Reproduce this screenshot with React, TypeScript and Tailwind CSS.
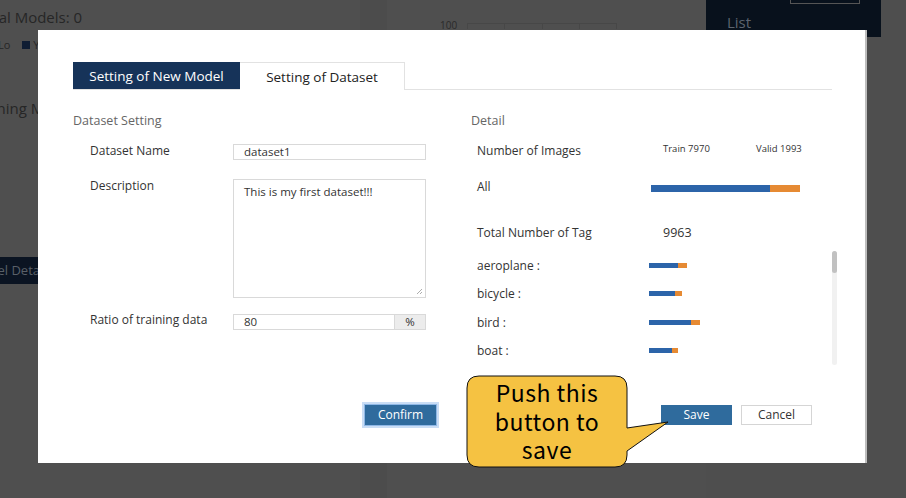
import React from 'react';

const tags = [
  { name: 'aeroplane :', train: 29, valid: 9 },
  { name: 'bicycle :', train: 26, valid: 7 },
  { name: 'bird :', train: 42, valid: 9 },
  { name: 'boat :', train: 23, valid: 6 },
  { name: 'bottle :', train: 30, valid: 8 },
];

const Callout = () => (
  <div className="absolute left-[466px] top-[375px] w-[204px] h-[94px]">
    <svg width="204" height="94" className="absolute inset-0">
      <path
        d="M13,1 H149 Q161,1 161,13 V53 L202,47 L161,76 V80 Q161,92 149,92 H13 Q1,92 1,80 V13 Q1,1 13,1 Z"
        fill="#f5c242"
        stroke="#111"
        strokeWidth="1"
      />
    </svg>
    <div className="relative w-[162px] pt-[3px] text-center text-[23px] leading-[28.5px] tracking-[0.5px] text-black font-['Noto_Sans_CJK_JP',sans-serif]">
      Push this
      <br />
      button to
      <br />
      save
    </div>
  </div>
);

export default function App() {
  return (
    <div className="relative w-[906px] h-[498px] overflow-hidden bg-[#4e4e4e] font-['Open_Sans',sans-serif]">
      {/* page underneath the dialog */}
      <div className="flex h-full">
        <div className="w-[360px] bg-[#4f4f4f] text-[#262626]">
          <div className="ml-[-24px] pt-[6px] text-[15px]">Total Models: 0</div>
          <div className="flex items-center mt-[8px] text-[11px]">
            <span className="ml-[-2px]">Lo</span>
            <span className="ml-[12px] w-[8px] h-[8px] bg-[#0f1d33]" />
            <span className="ml-[3px]">Y</span>
          </div>
          <div className="ml-[-30px] mt-[44px] text-[15px]">Training Models</div>
          <div className="mt-[137px] w-[38px] h-[27px] bg-[#0b1422] overflow-hidden">
            <div className="ml-[-30px] whitespace-nowrap text-[13px] leading-[27px] text-[#5a6068]">Model Details</div>
          </div>
        </div>
        <div className="w-[27px] bg-[#4c4c4c]" />
        <div className="w-[319px] bg-[#4f4f4f] pt-[18px] pl-[53px]">
          <div className="flex items-center gap-[10px]">
            <span className="text-[10px] text-[#2a2a2a]">100</span>
            <div className="flex w-[150px] h-[6px] border-t border-[#474747]">
              <div className="flex-1 border-l border-[#474747]" />
              <div className="flex-1 border-l border-[#474747]" />
              <div className="flex-1 border-l border-[#474747]" />
              <div className="flex-1 border-l border-r border-[#474747]" />
            </div>
          </div>
        </div>
        <div className="w-[175px]">
          <div className="h-[37px] bg-[#08111c] pl-[21px] relative">
            <div className="absolute left-[84px] top-0 w-[70px] h-[4px] border border-t-0 border-[#555]" />
            <div className="pt-[12px] text-[15px] leading-[20px] text-[#5c6470]">List</div>
          </div>
        </div>
      </div>

      {/* dialog */}
      <div className="absolute left-[38px] top-[30px] w-[829px] h-[433px] bg-white border-r-2 border-[#bdbdbd] px-[35px] pt-[32px] text-[#333]">
        <div className="flex border-b border-[#e2e2e2] w-[759px]">
          <div className="w-[167px] h-[27px] bg-[#163359] text-white text-[13.5px] leading-[29px] text-center">
            Setting of New Model
          </div>
          <div className="w-[165px] h-[28px] mb-[-1px] bg-white border-t border-r border-[#e2e2e2] text-[#222] text-[13.5px] leading-[29px] text-center">
            Setting of Dataset
          </div>
        </div>

        <div className="grid grid-cols-[398px_1fr]">
          {/* left column */}
          <div>
            <div className="mt-[22px] text-[12.5px] leading-[18px] text-[#666]">Dataset Setting</div>
            <div className="pl-[17px] text-[12px] text-[#333]">
              <div className="flex mt-[14px]">
                <div className="w-[143px] leading-[14px]">Dataset Name</div>
                <div className="w-[193px] h-[16px] border border-[#d9d9d9] pl-[10px] text-[11.5px] leading-[14px]">dataset1</div>
              </div>
              <div className="flex mt-[19px]">
                <div className="w-[143px] leading-[14px]">Description</div>
                <div className="relative w-[193px] h-[119px] border border-[#d9d9d9] pl-[10px] pt-[5px] text-[11.5px] leading-[14px]">
                  This is my first dataset!!!
                  <svg width="7" height="7" className="absolute right-[2px] bottom-[2px]">
                    <path d="M1,6 L6,1 M4,6 L6,4" stroke="#999" strokeWidth="0.8" />
                  </svg>
                </div>
              </div>
              <div className="flex mt-[16px]">
                <div className="w-[143px] leading-[14px] mt-[-1px]">Ratio of training data</div>
                <div className="flex w-[193px] h-[16px] border border-[#d9d9d9] text-[11.5px] leading-[14px]">
                  <div className="flex-1 pl-[10px]">80</div>
                  <div className="w-[31px] bg-[#ececec] border-l border-[#d9d9d9] text-center">%</div>
                </div>
              </div>
            </div>
          </div>

          {/* right column */}
          <div>
            <div className="mt-[22px] text-[12.5px] leading-[18px] text-[#666]">Detail</div>
            <div className="pl-[6px] text-[12px] text-[#333]">
              <div className="flex items-center mt-[14px] h-[14px]">
                <div className="w-[186px]">Number of Images</div>
                <div className="w-[93px] text-[9.5px] -mt-[4px]">Train 7970</div>
                <div className="text-[9.5px] -mt-[4px]">Valid 1993</div>
              </div>
              <div className="flex mt-[22px] h-[16px]">
                <div className="w-[174px] leading-[14px]">All</div>
                <div className="flex mt-[5px] h-[7px] w-[149px]">
                  <div className="w-[119px] bg-[#2c64a9]" />
                  <div className="flex-1 bg-[#e68a33]" />
                </div>
              </div>
              <div className="flex mt-[30px] h-[14px] items-center">
                <div className="w-[186px]">Total Number of Tag</div>
                <div className="text-[12.5px]">9963</div>
              </div>
              <div className="flex mt-[11px] h-[114px] w-[360px]">
                <div className="flex-1 overflow-hidden">
                  {tags.map((t) => (
                    <div key={t.name} className="flex items-center h-[28.5px]">
                      <div className="w-[172px] leading-[14px] mt-[1px]">{t.name}</div>
                      <div className="flex h-[5px]">
                        <div className="bg-[#2c64a9]" style={{ width: t.train }} />
                        <div className="bg-[#e68a33]" style={{ width: t.valid }} />
                      </div>
                    </div>
                  ))}
                </div>
                <div className="w-[5px] h-full bg-[#f1f1f1] rounded-full">
                  <div className="w-[5px] h-[22px] bg-[#c1c1c1] rounded-full" />
                </div>
              </div>
            </div>
          </div>
        </div>

        <div className="flex mt-[39px] text-[12px]">
          <button className="ml-[291px] w-[73px] h-[22px] bg-[#2f6b9d] text-white border border-[#8fb8e6] shadow-[0_0_0_2px_#c9ddf5]">
            Confirm
          </button>
          <button className="ml-[224px] mt-[1px] w-[71px] h-[20px] bg-[#2f6b9d] text-white">Save</button>
          <button className="ml-[9px] mt-[1px] w-[71px] h-[20px] bg-white border border-[#d5d5d5] text-[#333]">Cancel</button>
        </div>
      </div>

      <Callout />
    </div>
  );
}
